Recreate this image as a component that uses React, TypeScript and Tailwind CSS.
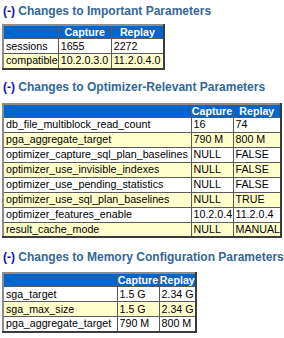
import clsx from "clsx";

type Row = [string, string, string];

const IMPORTANT: Row[] = [
  ["sessions", "1655", "2272"],
  ["compatible", "10.2.0.3.0", "11.2.0.4.0"],
];

const OPTIMIZER: Row[] = [
  ["db_file_multiblock_read_count", "16", "74"],
  ["pga_aggregate_target", "790 M", "800 M"],
  ["optimizer_capture_sql_plan_baselines", "NULL", "FALSE"],
  ["optimizer_use_invisible_indexes", "NULL", "FALSE"],
  ["optimizer_use_pending_statistics", "NULL", "FALSE"],
  ["optimizer_use_sql_plan_baselines", "NULL", "TRUE"],
  ["optimizer_features_enable", "10.2.0.4", "11.2.0.4"],
  ["result_cache_mode", "NULL", "MANUAL"],
];

const MEMORY: Row[] = [
  ["sga_target", "1.5 G", "2.34 G"],
  ["sga_max_size", "1.5 G", "2.34 G"],
  ["pga_aggregate_target", "790 M", "800 M"],
];

function Heading({ title, className }: { title: string; className?: string }) {
  return (
    <h2
      className={clsx(
        "pl-[3px] text-[12px] font-bold leading-[16px] text-[#336699] font-['Liberation_Sans',Arial,sans-serif]",
        className
      )}
    >
      <span className="text-[#1010b0]">(-)</span> {title}
    </h2>
  );
}

function DiffTable({
  rows,
  widths,
  className,
}: {
  rows: Row[];
  widths: [string, string, string];
  className?: string;
}) {
  return (
    <table
      className={clsx(
        "ml-[2px] border-collapse border-2 border-t-[#8c8c8c] border-l-[#8c8c8c] border-b-[#3c3c3c] border-r-[#3c3c3c] font-['Liberation_Sans',Arial,sans-serif] text-[10.7px] text-black",
        className
      )}
    >
      <thead>
        <tr className="h-[13px] bg-[#0066cc] text-white">
          <th className={clsx("border border-[#5a5a5a] p-0", widths[0])} />
          <th className={clsx("border border-[#5a5a5a] p-0 text-center font-bold leading-[12px]", widths[1])}>
            Capture
          </th>
          <th className={clsx("border border-[#5a5a5a] p-0 text-center font-bold leading-[12px]", widths[2])}>
            Replay
          </th>
        </tr>
      </thead>
      <tbody>
        {rows.map(([name, cap, rep], i) => (
          <tr key={name} className={clsx("h-[15px]", i % 2 ? "bg-[#ffffcc]" : "bg-white")}>
            <td className="border border-[#5a5a5a] py-0 pl-[2px] pr-0 leading-[13px]">{name}</td>
            <td className="border border-[#5a5a5a] py-0 pl-[2px] pr-0 leading-[13px]">{cap}</td>
            <td className="border border-[#5a5a5a] py-0 pl-[2px] pr-0 leading-[13px]">{rep}</td>
          </tr>
        ))}
      </tbody>
    </table>
  );
}

export default function App() {
  return (
    <div className="h-[338px] w-[284px] overflow-hidden bg-white">
      <Heading title="Changes to Important Parameters" className="pt-[3px]" />
      <DiffTable
        rows={IMPORTANT}
        widths={["w-[55px]", "w-[53px]", "w-[53px]"]}
        className="mt-[5px]"
      />
      <Heading title="Changes to Optimizer-Relevant Parameters" className="mt-[9px]" />
      <DiffTable
        rows={OPTIMIZER}
        widths={["w-[188px]", "w-[42px]", "w-[41px]"]}
        className="mt-[8px]"
      />
      <Heading title="Changes to Memory Configuration Parameters" className="mt-[11px]" />
      <DiffTable
        rows={MEMORY}
        widths={["w-[114px]", "w-[42px]", "w-[37px]"]}
        className="mt-[7px]"
      />
    </div>
  );
}
